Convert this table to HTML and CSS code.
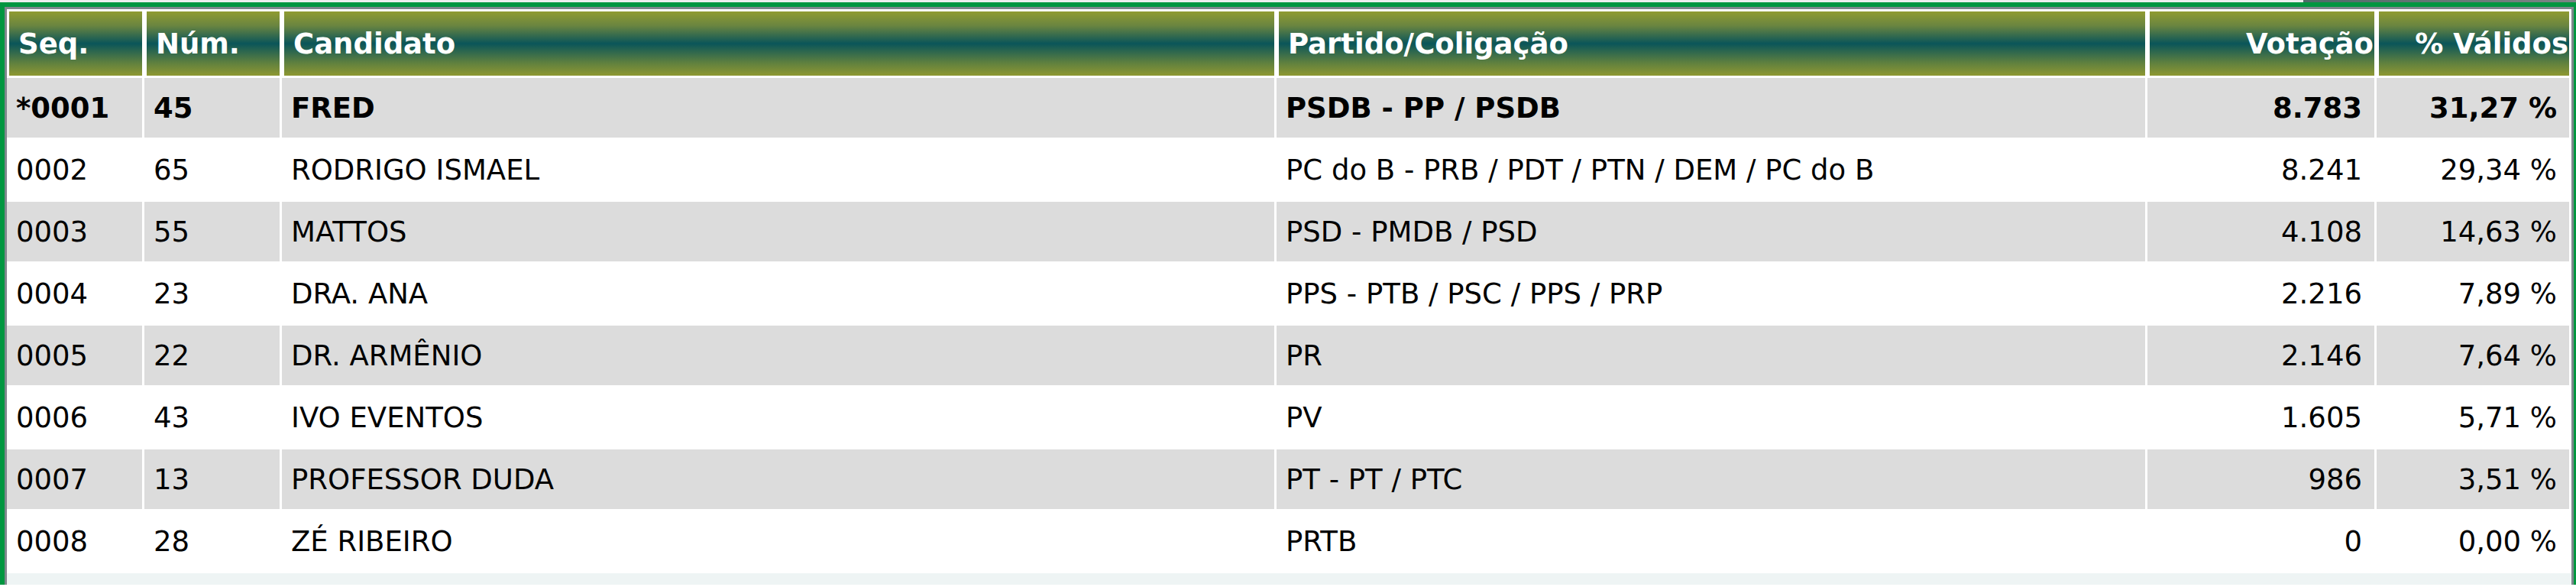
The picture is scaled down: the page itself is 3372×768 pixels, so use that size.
FILE: index.html
```
<!DOCTYPE html>
<html lang="pt-BR">
<head>
<meta charset="utf-8">
<title>Resultado</title>
<link rel="stylesheet" href="styles.css">
</head>
<body>
<div class="topstrip"></div>
<div class="frame">
  <div class="inner">
    <table class="results">
      <colgroup>
        <col class="c-seq"><col class="c-num"><col class="c-cand"><col class="c-part"><col class="c-vot"><col class="c-pct">
      </colgroup>
      <thead>
        <tr>
          <th>Seq.</th>
          <th>Núm.</th>
          <th>Candidato</th>
          <th>Partido/Coligação</th>
          <th class="num">Votação</th>
          <th class="num">% Válidos</th>
        </tr>
      </thead>
      <tbody>
        <tr class="odd elected">
          <td>*0001</td><td>45</td><td>FRED</td><td>PSDB - PP / PSDB</td><td class="num">8.783</td><td class="num">31,27 %</td>
        </tr>
        <tr class="even">
          <td>0002</td><td>65</td><td>RODRIGO ISMAEL</td><td>PC do B - PRB / PDT / PTN / DEM / PC do B</td><td class="num">8.241</td><td class="num">29,34 %</td>
        </tr>
        <tr class="odd">
          <td>0003</td><td>55</td><td>MATTOS</td><td>PSD - PMDB / PSD</td><td class="num">4.108</td><td class="num">14,63 %</td>
        </tr>
        <tr class="even">
          <td>0004</td><td>23</td><td>DRA. ANA</td><td>PPS - PTB / PSC / PPS / PRP</td><td class="num">2.216</td><td class="num">7,89 %</td>
        </tr>
        <tr class="odd">
          <td>0005</td><td>22</td><td>DR. ARMÊNIO</td><td>PR</td><td class="num">2.146</td><td class="num">7,64 %</td>
        </tr>
        <tr class="even">
          <td>0006</td><td>43</td><td>IVO EVENTOS</td><td>PV</td><td class="num">1.605</td><td class="num">5,71 %</td>
        </tr>
        <tr class="odd">
          <td>0007</td><td>13</td><td>PROFESSOR DUDA</td><td>PT - PT / PTC</td><td class="num">986</td><td class="num">3,51 %</td>
        </tr>
        <tr class="even">
          <td>0008</td><td>28</td><td>ZÉ RIBEIRO</td><td>PRTB</td><td class="num">0</td><td class="num">0,00 %</td>
        </tr>
      </tbody>
    </table>
    <div class="tail"></div>
  </div>
</div>
<div class="below"></div>
</body>
</html>
```
FILE: styles.css
```
html, body {
  margin: 0;
  padding: 0;
  background: #ffffff;
}

body {
  width: 3372px;
  font-family: "DejaVu Sans", Verdana, sans-serif;
  overflow: hidden;
}

.topstrip {
  height: 3px;
  background: linear-gradient(to right, #eeeeee 0, #eeeeee 3015px, #4f6a68 3015px, #7d8486 3372px);
}

.frame {
  border-top: 6px solid #009640;
  border-left: 6px solid #009640;
  border-right: 3px solid #009640;
}

.inner {
  border-top: 3px solid #7f878d;
  border-left: 3px solid #7f878d;
  border-right: 3px solid #7f878d;
  background: #ffffff;
}

.results {
  border-collapse: separate;
  border-spacing: 0;
  table-layout: fixed;
  width: 3357px;
  font-size: 37px;
  color: #000000;
}

.c-seq { width: 180px; }
.c-num { width: 180px; }
.c-cand { width: 1302px; }
.c-part { width: 1140px; }
.c-vot { width: 300px; }
.c-pct { width: 255px; }

.results th {
  box-sizing: border-box;
  height: 90px;
  border: 3px solid #ffffff;
  padding: 0 1px 0 12px;
  background: linear-gradient(to bottom, #909b31 0%, #6a8540 22%, #0a5559 50%, #5f803f 80%, #8e9832 100%);
  color: #ffffff;
  font-weight: bold;
  text-align: left;
  vertical-align: middle;
  white-space: nowrap;
}

.results td {
  box-sizing: border-box;
  height: 81px;
  border-right: 3px solid #ffffff;
  border-bottom: 3px solid #ffffff;
  padding: 0 16px 0 12px;
  vertical-align: middle;
  white-space: nowrap;
}

.results .num {
  text-align: right;
}

.results tr.odd td {
  background: #dcdcdc;
}

.results tr.even td {
  background: #ffffff;
}

.results tr.elected td {
  font-weight: bold;
}

.tail {
  height: 15px;
  background: #eef4f4;
}

.below {
  height: 3px;
  background: #ffffff;
}
```
